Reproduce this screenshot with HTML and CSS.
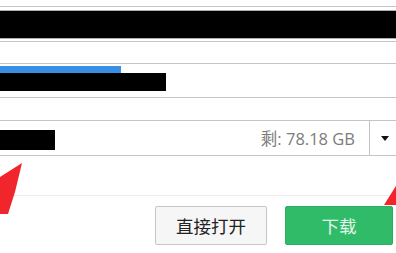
FILE: index.html
```html
<!DOCTYPE html>
<html lang="zh">
<head>
<meta charset="utf-8">
<link rel="stylesheet" href="styles.css">
</head>
<body>
<div class="dialog">
  <div class="field field-name">
    <div class="redact-bar"></div>
  </div>
  <div class="field field-path">
    <div class="selection"></div>
    <div class="redact-path"></div>
  </div>
  <div class="field field-dir">
    <div class="redact-dir"></div>
    <span class="free">剩: 78.18 GB</span>
    <div class="drop"><span class="caret"></span></div>
  </div>
  <div class="divider"></div>
  <div class="actions">
    <button class="btn btn-open">直接打开</button>
    <button class="btn btn-download">下载</button>
  </div>
</div>
<svg class="arrow arrow-left" width="40" height="70" viewBox="0 0 40 70">
  <polygon points="22,13 15,42 8,64 -20,64 -20,30 0,27" fill="#f0262c"/>
</svg>
<svg class="arrow arrow-right" width="20" height="30" viewBox="0 0 20 30">
  <polygon points="1,22 16,-2 30,-2 30,22" fill="#f0262c"/>
</svg>
</body>
</html>
```

FILE: styles.css
```css
html, body {
  margin: 0;
  padding: 0;
  background: #ffffff;
  width: 396px;
  height: 253px;
  overflow: hidden;
  position: relative;
  font-family: "Noto Sans CJK SC", "Noto Sans", sans-serif;
}

.dialog {
  margin-left: -6px;
  width: 412px;
  padding-top: 6px;
  display: flex;
  flex-direction: column;
}

.field {
  border: 1px solid #c4c4c4;
  box-sizing: border-box;
  height: 36px;
  position: relative;
  display: flex;
  align-items: center;
}

.field-name {
  padding: 4px 0;
}

.redact-bar {
  flex: 1;
  height: 27px;
  background: #000;
  border-top: 1px solid #b0b0b0;
  border-bottom: 1px solid #b0b0b0;
}

.field-path {
  margin-top: 21px;
  height: 35px;
  align-items: flex-start;
}

.selection {
  position: absolute;
  left: 0;
  top: 2px;
  width: 126px;
  height: 20px;
  background: #3a8ee6;
}

.redact-path {
  position: absolute;
  left: 0;
  top: 9px;
  width: 171px;
  height: 18px;
  background: #000;
}

.field-dir {
  margin-top: 22px;
  height: 36px;
}

.redact-dir {
  width: 60px;
  height: 20px;
  background: #000;
  align-self: center;
  margin-top: 4px;
}

.free {
  margin-left: auto;
  margin-right: 14px;
  font-family: "Open Sans", "Noto Sans CJK SC", sans-serif;
  font-size: 16.5px;
  color: #7c7c7c;
}

.drop {
  align-self: stretch;
  width: 36px;
  border-left: 1px solid #c4c4c4;
  display: flex;
  align-items: center;
  padding-left: 11px;
  box-sizing: border-box;
}

.caret {
  width: 0;
  height: 0;
  border-left: 4px solid transparent;
  border-right: 4px solid transparent;
  border-top: 5px solid #111;
}

.divider {
  margin-top: 39px;
  height: 1px;
  background: #ececec;
}

.actions {
  margin-top: 10px;
  display: flex;
  gap: 18px;
  padding-left: 161px;
}

.btn {
  height: 39px;
  box-sizing: border-box;
  border-radius: 2px;
  font-family: "Noto Sans CJK SC", sans-serif;
  font-size: 17.5px;
  font-weight: 400;
  padding: 0;
  cursor: pointer;
}

.btn-open {
  width: 112px;
  background: #f6f6f6;
  border: 1px solid #c6c6c6;
  color: #222;
}

.btn-download {
  width: 108px;
  background: #2fbb68;
  border: 1px solid #2aae5f;
  color: #e4f6ea;
}

.arrow {
  position: absolute;
  overflow: visible;
}

.arrow-left {
  left: 0;
  top: 150px;
}

.arrow-right {
  left: 383px;
  top: 183px;
}
```
